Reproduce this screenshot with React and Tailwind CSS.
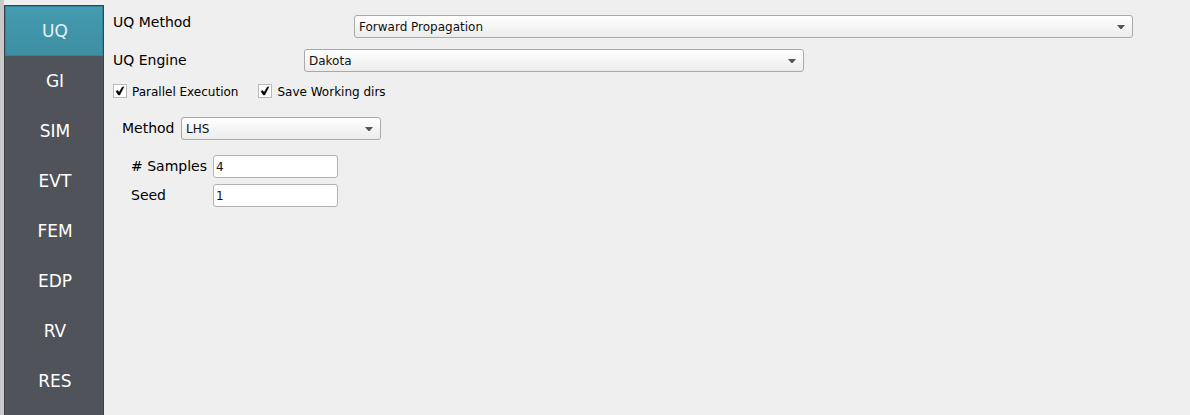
import { useState } from "react";

const SECTIONS = ["UQ", "GI", "SIM", "EVT", "FEM", "EDP", "RV", "RES"];

function Sidebar({ active, onSelect }) {
  return (
    <nav className="flex w-[104px] shrink-0 flex-col border-l-4 border-[#c9c9cb] pt-[5px]">
      <div className="flex grow flex-col border-x border-t border-[#3e4148] bg-[#50535a]">
        {SECTIONS.map((name) => (
          <button
            key={name}
            type="button"
            onClick={() => onSelect(name)}
            className={
              name === active
                ? "h-[50px] border border-[#2f8599] bg-linear-to-b from-[#459bb0] to-[#3d8ea2] pt-px pl-[2px] text-[17px] text-[#e4f1f4]"
                : "h-[50px] pt-px pl-[2px] text-[17px] text-white"
            }
          >
            {name}
          </button>
        ))}
      </div>
    </nav>
  );
}

function Dropdown({ id, options, className }) {
  return (
    <div className={`relative ${className}`}>
      <select
        id={id}
        className="block h-[23px] w-full appearance-none rounded-[3px] border border-[#a9a9a9] bg-linear-to-b from-white to-[#ececec] pr-6 pl-1 text-xs text-[#111111]"
      >
        {options.map((option) => (
          <option key={option}>{option}</option>
        ))}
      </select>
      <svg
        viewBox="0 0 8 4"
        className="pointer-events-none absolute top-[10px] right-[8px] h-[4px] w-[8px]"
        aria-hidden="true"
      >
        <path d="M0 0H8L4.6 4H3.4Z" fill="#555555" />
      </svg>
    </div>
  );
}

function Checkbox({ label }) {
  return (
    <label className="flex items-start gap-[5px] text-xs">
      <span className="relative block size-[14px]">
        <input
          type="checkbox"
          defaultChecked
          className="peer block size-[14px] appearance-none border border-[#b9b9b9] bg-white"
        />
        <svg
          viewBox="0 0 14 14"
          className="pointer-events-none absolute inset-0 hidden size-[14px] peer-checked:block"
          aria-hidden="true"
        >
          <path
            d="M3 7.2L4.8 6.6L6 8.6L9.2 3.2L11 2.8L6.7 11H5.4Z"
            fill="#000000"
            stroke="#000000"
            strokeWidth="0.5"
          />
        </svg>
      </span>
      {label}
    </label>
  );
}

function NumberField({ id, label, value }) {
  return (
    <div className="flex items-center">
      <label htmlFor={id} className="w-[82px] shrink-0 pb-px">
        {label}
      </label>
      <input
        id={id}
        type="text"
        defaultValue={value}
        className="h-[23px] w-[125px] rounded-[3px] border border-[#b2b2b2] bg-white px-[2px] text-xs text-[#111111]"
      />
    </div>
  );
}

export default function App() {
  const [active, setActive] = useState("UQ");

  return (
    <div className="flex min-h-screen bg-[#efefef] font-['DejaVu_Sans',sans-serif] text-sm text-black">
      <Sidebar active={active} onSelect={setActive} />
      <main className="flex min-w-0 grow flex-col pt-[15px] pr-[57px] pl-[9px]">
        <div className="flex items-start">
          <label htmlFor="uq-method" className="w-[241px] shrink-0 leading-[14px]">
            UQ Method
          </label>
          <Dropdown
            id="uq-method"
            options={["Forward Propagation", "Sensitivity Analysis"]}
            className="min-w-0 grow"
          />
        </div>
        <div className="mt-[11px] flex items-center">
          <label htmlFor="uq-engine" className="w-[191px] shrink-0 pb-px">
            UQ Engine
          </label>
          <Dropdown id="uq-engine" options={["Dakota", "SimCenterUQ"]} className="w-[500px]" />
        </div>
        <div className="mt-3 flex gap-5">
          <Checkbox label="Parallel Execution" />
          <Checkbox label="Save Working dirs" />
        </div>
        <div className="mt-[17px] ml-[9px] flex items-center">
          <label htmlFor="method" className="w-[59px] shrink-0 pb-px">
            Method
          </label>
          <Dropdown id="method" options={["LHS", "Monte Carlo"]} className="w-[200px]" />
        </div>
        <div className="mt-[15px] ml-[18px] flex flex-col gap-[6px]">
          <NumberField id="samples" label="# Samples" value="4" />
          <NumberField id="seed" label="Seed" value="1" />
        </div>
      </main>
    </div>
  );
}
